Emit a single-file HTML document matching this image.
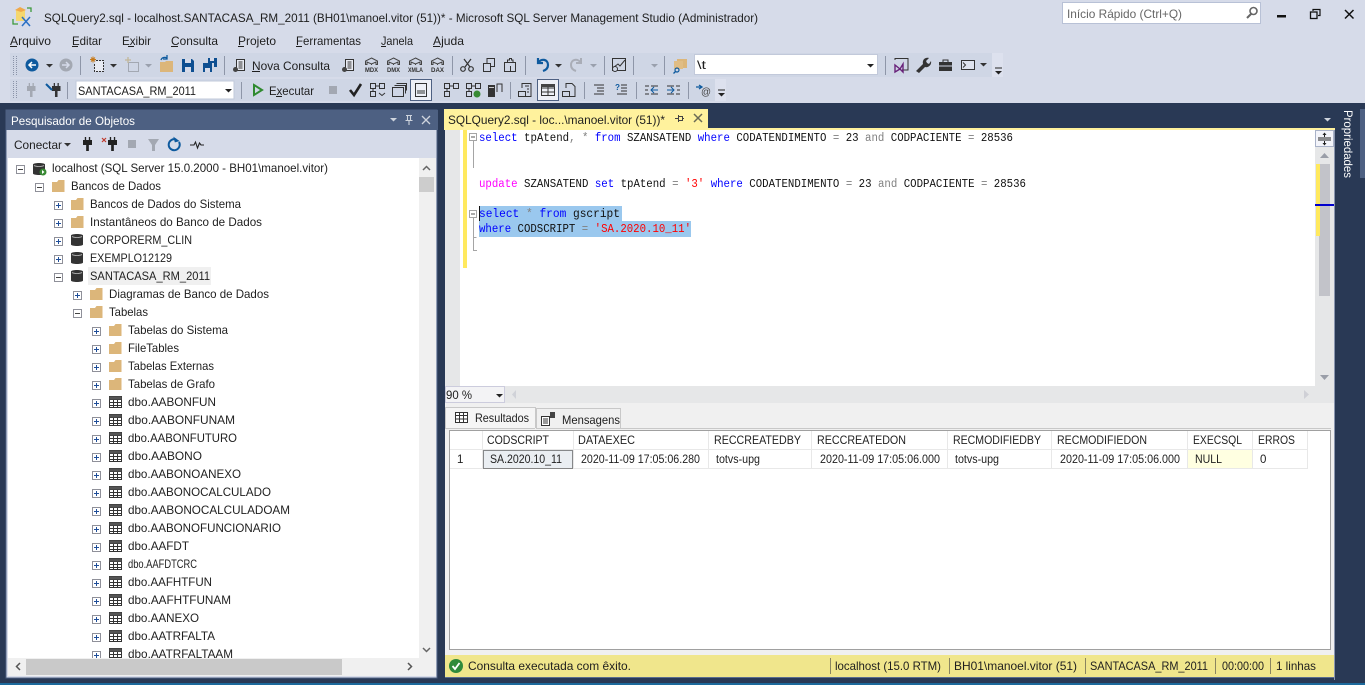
<!DOCTYPE html>
<html><head><meta charset="utf-8"><title>SSMS</title>
<style>
html,body{margin:0;padding:0;width:1365px;height:685px;overflow:hidden;background:#d6dbe9}
svg{display:block}
text{font-family:"Liberation Sans",sans-serif;font-size:12px;fill:#1e1e1e;white-space:pre}
.m text,text.m{font-family:"Liberation Mono",monospace;font-size:11.5px}
.g{font-size:11.5px}
.w{fill:#f4f6fb}
</style></head><body>
<svg xmlns="http://www.w3.org/2000/svg" width="1365" height="685" viewBox="0 0 1365 685">
<defs>
<g id="plus"><g transform="translate(0 1)"><rect x=".5" y=".5" width="8" height="8" fill="#fff" stroke="#8f9099"/><path d="M2 4.500h5M4.500 2v5" stroke="#1f4e99"/></g></g>
<g id="minus"><g transform="translate(0 1)"><rect x=".5" y=".5" width="8" height="8" fill="#fff" stroke="#8f9099"/><path d="M2 4.500h5" stroke="#444"/></g></g>
<g id="folder"><path d="M0 2h5l1.500-2h6v12H0z" fill="#dcb67a"/></g>
<g id="db"><g transform="translate(0 -1)"><path d="M0 2.500C0 .5 12 .5 12 2.500v9c0 2-12 2-12 0z" fill="#333"/><path d="M1 3.500c2 1.300 8 1.300 10 0" stroke="#bbb" fill="none" stroke-width=".8"/></g></g>
<g id="tbl"><rect x=".5" y=".5" width="12" height="11" fill="#fff" stroke="#333"/><path d="M.5 3.500h12M.5 6.500h12M.5 9.500h12M4.500.5v11M8.500.5v11" stroke="#333"/><rect x=".5" y=".5" width="12" height="3" fill="#555"/></g>
<path id="dd" d="M0 0h7l-3.500 3.500z"/>
<g id="cube"><path d="M6.500 0l6 3v3.500h-1.500V4l-4.500 2-4.500-2v2.500H.5V3z" fill="none" stroke="#444"/><path d="M6.500 6v1" stroke="#444"/></g>
<g id="plug"><path d="M2 0h1.500v3H2zM6.500 0H8v3H6.500zM0 3h10v5H6.500v6h-3V8H0z"/></g>
<g id="doc"><path d="M3.500.5h8v11h-8z" fill="#e8ebf3" stroke="#333"/><path d="M5.500 3h4M5.500 5h4M5.500 7h4M5.500 9h4" stroke="#333"/><ellipse cx="2.500" cy="10.500" rx="2.500" ry="2.500" fill="#444"/></g>
</defs>

<!-- window chrome -->
<rect width="1365" height="685" fill="#d6dbe9"/>
<rect y="103" width="1365" height="582" fill="#293955"/>
<rect y="683" width="1365" height="2" fill="#1d6a9c"/>

<!-- app icon -->
<rect x="16" y="10" width="9" height="11" fill="#f5d76e"/><path d="M15 10l5-3 6 3-5 2z" fill="#f0a94a"/>
<path d="M13 19v5h5M27 8h4v4" fill="none" stroke="#3c9a3c" stroke-width="1.300"/>
<path d="M22 26l8-9M22 17l8 9" stroke="#2a6fc4" stroke-width="1.500"/>

<text x="44" y="22" textLength="714" lengthAdjust="spacingAndGlyphs">SQLQuery2.sql - localhost.SANTACASA_RM_2011 (BH01\manoel.vitor (51))* - Microsoft SQL Server Management Studio (Administrador)</text>

<!-- quick launch -->
<rect x="1062.500" y="2.500" width="198" height="21" fill="#fff" stroke="#b8c1d6"/>
<text x="1067" y="18" textLength="115" lengthAdjust="spacingAndGlyphs" style="fill:#666">Início Rápido (Ctrl+Q)</text>
<circle cx="1253.500" cy="11" r="3.500" fill="none" stroke="#666" stroke-width="1.600"/><path d="M1251 14l-4 4" stroke="#666" stroke-width="2"/>
<rect x="1277" y="15" width="9" height="2.500" fill="#111"/>
<path d="M1313 11V9.500h7v6h-2" fill="none" stroke="#111" stroke-width="1.200"/><rect x="1310.500" y="12" width="6.500" height="6.500" fill="none" stroke="#111" stroke-width="1.300"/>
<path d="M1345 10l8.500 8.500M1353.500 10l-8.500 8.500" stroke="#111" stroke-width="1.500"/>

<!-- menu -->
<g>
<text x="10" y="45" textLength="41" lengthAdjust="spacingAndGlyphs">Arquivo</text><rect x="10" y="46" width="7" height="1" fill="#1e1e1e"/>
<text x="72" y="45" textLength="30" lengthAdjust="spacingAndGlyphs">Editar</text><rect x="72" y="46" width="6" height="1" fill="#1e1e1e"/>
<text x="122" y="45" textLength="29" lengthAdjust="spacingAndGlyphs">Exibir</text><rect x="128" y="46" width="6" height="1" fill="#1e1e1e"/>
<text x="171" y="45" textLength="47" lengthAdjust="spacingAndGlyphs">Consulta</text><rect x="171" y="46" width="7" height="1" fill="#1e1e1e"/>
<text x="238" y="45" textLength="38" lengthAdjust="spacingAndGlyphs">Projeto</text><rect x="238" y="46" width="6" height="1" fill="#1e1e1e"/>
<text x="296" y="45" textLength="65" lengthAdjust="spacingAndGlyphs">Ferramentas</text><rect x="296" y="46" width="6" height="1" fill="#1e1e1e"/>
<text x="381" y="45" textLength="32" lengthAdjust="spacingAndGlyphs">Janela</text><rect x="381" y="46" width="5" height="1" fill="#1e1e1e"/>
<text x="433" y="45" textLength="31" lengthAdjust="spacingAndGlyphs">Ajuda</text><rect x="433" y="46" width="7" height="1" fill="#1e1e1e"/>
</g>

<!-- toolbars bg -->
<rect x="10" y="53" width="982" height="24" fill="#cfd6e5"/>
<rect x="992" y="53" width="11" height="24" fill="#dde1ee"/>
<rect x="10" y="79" width="705" height="22" fill="#cfd6e5"/>
<rect x="715" y="79" width="11" height="22" fill="#dde1ee"/>
<path d="M13.500 56v19M16.500 56v19M13.500 81v18M16.500 81v18" stroke="#8a93a8" stroke-dasharray="1 1"/>

<!-- toolbar separators -->
<path d="M80.500 56v19M224.500 56v19M452.500 56v19M525.500 56v19M604.500 56v19M633.500 56v19M664.500 56v19M885.500 56v19M67.500 82v17M241.500 82v17M510.500 82v17M584.500 82v17M636.500 82v17M688.500 82v17" stroke="#8e96a8"/>

<!-- row 1 -->
<circle cx="32" cy="65" r="6.500" fill="#0e5a9e"/><path d="M36 65h-6M32 62l-3 3 3 3" stroke="#fff" stroke-width="1.500" fill="none"/>
<use href="#dd" x="46" y="64" fill="#333"/>
<circle cx="66" cy="65" r="6.500" fill="#a3a8b2"/><path d="M62 65h6M66 62l3 3-3 3" stroke="#d6dbe9" stroke-width="1.500" fill="none"/>
<path d="M96 60.500h7.500v11h-9V64" fill="#e8ebf3" stroke="#333" stroke-dasharray="2 1"/><path d="M90 59.500h6M93 56.500v6M91 57.500l4 4M95 57.500l-4 4" stroke="#c77a1a" stroke-width="1"/>
<use href="#dd" x="110" y="64" fill="#333"/>
<rect x="128.500" y="62.500" width="10" height="9" fill="none" stroke="#a3a8b2"/><path d="M125 60h6M128 57v6" stroke="#c2b79a" stroke-width="1.300"/>
<use href="#dd" x="145" y="64" fill="#9aa0ad"/>
<path d="M160 62h5l1-1h7v11h-13z" fill="#dcb67a"/><path d="M161 60c1-3 4-3 6-2M167 55v4h-4" stroke="#0e5a9e" fill="none" stroke-width="1.300"/>
<path d="M182 59h10l2 2v11h-12z" fill="#0e4f91"/><rect x="185" y="59" width="6" height="4" fill="#d6dbe9"/><rect x="185" y="67" width="6" height="5" fill="#d6dbe9"/>
<path d="M203 63h9v9h-9z" fill="#0e4f91"/><path d="M208 58h9v9h-3v-4h-6z" fill="#0e4f91"/><rect x="205" y="68" width="5" height="4" fill="#d6dbe9"/><rect x="210" y="58" width="4" height="3" fill="#d6dbe9"/>
<use href="#doc" x="233" y="59"/>
<text x="252" y="70" textLength="78" lengthAdjust="spacingAndGlyphs">Nova Consulta</text><rect x="252" y="71" width="8" height="1" fill="#1e1e1e"/>
<use href="#doc" x="342" y="59"/>
<use href="#cube" x="365" y="58"/><text x="365" y="72" textLength="13" lengthAdjust="spacingAndGlyphs" style="font-size:6.500px;font-weight:bold;fill:#333">MDX</text>
<use href="#cube" x="387" y="58"/><text x="387" y="72" textLength="13" lengthAdjust="spacingAndGlyphs" style="font-size:6.500px;font-weight:bold;fill:#333">DMX</text>
<use href="#cube" x="409" y="58"/><text x="408" y="72" textLength="15" lengthAdjust="spacingAndGlyphs" style="font-size:6.500px;font-weight:bold;fill:#333">XMLA</text>
<use href="#cube" x="431" y="58"/><text x="431" y="72" textLength="13" lengthAdjust="spacingAndGlyphs" style="font-size:6.500px;font-weight:bold;fill:#333">DAX</text>
<path d="M464 59l6 8M471 59l-6 8" stroke="#333" stroke-width="1.200"/><circle cx="463" cy="69" r="2.300" fill="none" stroke="#333" stroke-width="1.200"/><circle cx="471" cy="69" r="2.300" fill="none" stroke="#333" stroke-width="1.200"/>
<rect x="483.500" y="63.500" width="7" height="8" fill="none" stroke="#333"/><path d="M487 63v-4.500h7.500v8H491" fill="none" stroke="#333"/>
<rect x="504.500" y="62.500" width="11" height="9" fill="none" stroke="#333"/><path d="M507.500 62v-2h2v-1.500h2V60h1.500v3" fill="none" stroke="#333"/><path d="M510.500 66v5.500" stroke="#333"/>
<path d="M538 58v5h5M538 63c3-5 10-4 10 2 0 3-2 5-5 6" fill="none" stroke="#0e5a9e" stroke-width="2.200"/>
<use href="#dd" x="555" y="64" fill="#333"/>
<path d="M581 58v5h-5M581 63c-3-5-10-4-10 2 0 3 2 5 5 6" fill="none" stroke="#a9adb7" stroke-width="2"/>
<use href="#dd" x="590" y="64" fill="#9aa0ad"/>
<rect x="612.500" y="58.500" width="13" height="12" fill="none" stroke="#333"/><path d="M614 67l4-3 2 2 5-6" stroke="#333" fill="none"/><circle cx="615" cy="69" r="2.500" fill="#cfd6e5" stroke="#333"/>
<use href="#dd" x="651" y="64" fill="#9aa0ad"/>
<rect x="677" y="59" width="10" height="9" fill="#dcb67a"/><rect x="674" y="61" width="9" height="8" fill="#e0bd85"/><circle cx="677" cy="70" r="2" fill="none" stroke="#0e5a9e" stroke-width="1.200"/><path d="M675.500 71.500l-2 2" stroke="#0e5a9e" stroke-width="1.300"/>
<rect x="694.500" y="54.500" width="183" height="20" fill="#fff" stroke="#c2c9da"/>
<text x="697" y="69" textLength="9" lengthAdjust="spacingAndGlyphs">\t</text>
<use href="#dd" x="867" y="64" fill="#222"/>
<path d="M895 60v-1.500h13V70h-6" fill="none" stroke="#333"/><path d="M894 62h8v10h-8z" fill="#cfd6e5"/><path d="M895 65l5 4 3-5v8l-3-3-5 3z" fill="none" stroke="#68217a" stroke-width="1.400"/>
<path d="M917 72l7-7c-1-4 2-7 6-6l-3 3 1 2 2 1 2-3c1 4-3 7-6 6l-6 6z" fill="#333" transform="translate(-1 -1)"/>
<path d="M939 62h13v9h-13z" fill="#333"/><path d="M943 62v-2h5v2" fill="none" stroke="#333"/><path d="M939 66h13" stroke="#cfd6e5"/>
<rect x="961.500" y="60.500" width="13" height="9" fill="#dfe3ee" stroke="#333"/><path d="M963 62.500l2.500 2.500-2.500 2.500" fill="none" stroke="#333"/>
<use href="#dd" x="980" y="63" fill="#333"/>
<path d="M995 68h7" stroke="#222"/><use href="#dd" x="995" y="71" fill="#222"/>

<!-- row 2 -->
<g fill="#a3a8b2" transform="translate(27 83) scale(.85 1)"><use href="#plug"/></g>
<g fill="#333" transform="translate(52 83) scale(.85 1)"><use href="#plug"/></g><path d="M46 84l6 6" stroke="#0e5a9e" stroke-width="2"/>
<rect x="76" y="81" width="158" height="18" fill="#fff" stroke="#c2c9da"/>
<text x="78" y="95" textLength="118" lengthAdjust="spacingAndGlyphs">SANTACASA_RM_2011</text>
<use href="#dd" x="225" y="89" fill="#222"/>
<path d="M254 85l8 5-8 5z" fill="none" stroke="#2f8a2f" stroke-width="2"/>
<text x="269" y="95" textLength="45" lengthAdjust="spacingAndGlyphs">Executar</text><rect x="276" y="96" width="6" height="1" fill="#1e1e1e"/>
<rect x="329" y="86" width="8" height="8" fill="#a3a8b2"/>
<path d="M350 90l4 5 7-11" stroke="#222" stroke-width="2.600" fill="none"/>
<g fill="none" stroke="#333"><rect x="370.500" y="83.500" width="5" height="5"/><rect x="379.500" y="83.500" width="5" height="5"/><rect x="370.500" y="91.500" width="5" height="5"/><path d="M376 86h3M373 89v2M379 93l3 2.500 3-2.500"/>
<rect x="392.500" y="87.500" width="11" height="9"/><path d="M394.500 85.500h11v8M396.500 83.500h10v7"/></g>
<rect x="410.500" y="79.500" width="21" height="21" fill="#eef0f6" stroke="#4d6082"/>
<rect x="415.500" y="83.500" width="11" height="13" fill="none" stroke="#333"/><path d="M417 91h8M417 93h8" stroke="#333"/>
<g fill="none" stroke="#333"><rect x="444.500" y="83.500" width="5" height="5"/><rect x="453.500" y="83.500" width="5" height="5"/><rect x="444.500" y="91.500" width="5" height="5"/><path d="M450 86h3M447 89v2"/></g>
<g fill="none" stroke="#333"><rect x="466.500" y="83.500" width="5" height="5"/><rect x="475.500" y="83.500" width="5" height="5"/><rect x="466.500" y="91.500" width="5" height="5"/><path d="M472 86h3M469 89v2"/></g><circle cx="477" cy="94" r="3.500" fill="#388a34"/>
<rect x="488" y="85" width="7" height="12" fill="#333"/><path d="M497 92V84h5v8" fill="none" stroke="#333"/><rect x="489" y="87" width="5" height="1" fill="#ccc"/>
<g fill="none" stroke="#333"><path d="M522 88v-4.500h9v13h-5"/><rect x="518.500" y="91.500" width="7" height="5"/><path d="M525 86h4M527 89h2M527 92h2"/></g>
<rect x="537.500" y="79.500" width="21" height="21" fill="#eef0f6" stroke="#4d6082"/>
<g fill="none" stroke="#333"><rect x="541.500" y="84.500" width="13" height="11"/><path d="M541 88h14M541 92h14M548 85v10"/></g><rect x="541" y="84" width="14" height="3" fill="#444"/>
<g fill="none" stroke="#333"><path d="M566 88v-4.500h6l3 3v10h-5"/><rect x="562.500" y="91.500" width="7" height="5"/></g>
<path d="M594 85h10M597 88h7M597 91h7M594 94h10" stroke="#333"/>
<path d="M621 88h6M621 91h6M617 94h10M621 85h6" stroke="#333"/><text x="615" y="90" textLength="5" lengthAdjust="spacingAndGlyphs" style="font-size:8px;fill:#0e5a9e;font-weight:bold">?</text>
<path d="M645 86h4M645 94h4M651 86h7M651 94h7M645 90h3" stroke="#333"/><path d="M651 90h7M654 87l-3 3 3 3" stroke="#0e5a9e" fill="none"/>
<path d="M667 86h7M667 94h7M676 86h4M676 94h4M677 90h3" stroke="#333"/><path d="M667 90h7M671 87l3 3-3 3" stroke="#0e5a9e" fill="none"/>
<path d="M696 87h5M699 85l3 2-3 2" stroke="#0e5a9e" fill="none" stroke-width="1.300"/><text x="701" y="95" textLength="10" lengthAdjust="spacingAndGlyphs" style="font-size:10px;fill:#444">@</text>
<path d="M718 90h7" stroke="#222"/><use href="#dd" x="718" y="93" fill="#222"/>

<!-- OBJECT EXPLORER -->
<rect x="6" y="110" width="431" height="568" fill="#d6dbe9" stroke="#4d6082"/>
<rect x="6" y="110" width="432" height="20" fill="#4d6082"/>
<text x="11" y="125" textLength="124" lengthAdjust="spacingAndGlyphs" style="fill:#fff">Pesquisador de Objetos</text>
<use href="#dd" x="390" y="118" fill="#ced4dd"/>
<path d="M406 115.500h6M407.500 115.500v5h3v-5M405.500 120.500h7M409 121v4" fill="none" stroke="#ced4dd" stroke-width="1.100"/>
<path d="M422 116l8 8M430 116l-8 8" stroke="#ced4dd" stroke-width="1.300"/>
<text x="14" y="149" textLength="48" lengthAdjust="spacingAndGlyphs">Conectar</text><use href="#dd" x="64" y="143" fill="#333"/>
<g fill="#222" transform="translate(83 137) scale(.9 1)"><use href="#plug"/></g>
<g fill="#222" transform="translate(108 137) scale(.9 1)"><use href="#plug"/></g><path d="M102 138l4 4M106 138l-4 4" stroke="#c0392b" stroke-width="1.200"/>
<rect x="128" y="140" width="8" height="8" fill="#a3a8b2"/>
<path d="M148 139h11l-4 6v6h-3v-6z" fill="#a3a8b2"/>
<path d="M179 142a5.500 5.500 0 1 1-3-2.500" fill="none" stroke="#0e5a9e" stroke-width="2"/><path d="M174 136v6h5z" fill="#0e5a9e" transform="rotate(-15 176 139)"/>
<path d="M190 145h4l1.500-3 2 6 2-5 1.500 2h3" fill="none" stroke="#222" stroke-width="1.100"/>

<rect x="8" y="158" width="411" height="500" fill="#fff"/>
<rect x="419" y="158" width="17" height="500" fill="#f0f0f0"/>
<rect x="419" y="177" width="15" height="15" fill="#cdcdcd"/>
<path d="M423 170l3.500-3.500 3.500 3.500" fill="none" stroke="#666" stroke-width="1.500"/>
<path d="M423 648l3.500 3.500 3.500-3.500" fill="none" stroke="#666" stroke-width="1.500"/>
<rect x="8" y="658" width="428" height="18" fill="#f0f0f0"/>
<rect x="26" y="659" width="316" height="16" fill="#c9c9c9"/>
<path d="M20 663l-3.500 3.500 3.500 3.500M408 663l3.500 3.500-3.500 3.500" fill="none" stroke="#555" stroke-width="1.500"/>

<svg x="8" y="158" width="411" height="500" viewBox="8 158 411 500" overflow="hidden">
<use href="#minus" x="16" y="164"/><use href="#db" x="33" y="163"/><circle cx="43" cy="172" r="3.500" fill="#388a34"/><path d="M42 170l2.500 2-2.500 2z" fill="#fff"/>
<text x="52" y="172" textLength="276" lengthAdjust="spacingAndGlyphs">localhost (SQL Server 15.0.2000 - BH01\manoel.vitor)</text>
<use href="#minus" x="35" y="182"/><use href="#folder" x="52" y="180"/><text x="71" y="190" textLength="90" lengthAdjust="spacingAndGlyphs">Bancos de Dados</text>
<use href="#plus" x="54" y="200"/><use href="#folder" x="71" y="198"/><text x="90" y="208" textLength="151" lengthAdjust="spacingAndGlyphs">Bancos de Dados do Sistema</text>
<use href="#plus" x="54" y="218"/><use href="#folder" x="71" y="216"/><text x="90" y="226" textLength="172" lengthAdjust="spacingAndGlyphs">Instantâneos do Banco de Dados</text>
<use href="#plus" x="54" y="236"/><use href="#db" x="71" y="234"/><text x="90" y="244" textLength="102" lengthAdjust="spacingAndGlyphs">CORPORERM_CLIN</text>
<use href="#plus" x="54" y="254"/><use href="#db" x="71" y="252"/><text x="90" y="262" textLength="82" lengthAdjust="spacingAndGlyphs">EXEMPLO12129</text>
<use href="#minus" x="54" y="272"/><use href="#db" x="71" y="270"/><rect x="88" y="267" width="123" height="18" fill="#f0f0f0"/><text x="90" y="280" textLength="120" lengthAdjust="spacingAndGlyphs">SANTACASA_RM_2011</text>
<use href="#plus" x="73" y="290"/><use href="#folder" x="90" y="288"/><text x="109" y="298" textLength="160" lengthAdjust="spacingAndGlyphs">Diagramas de Banco de Dados</text>
<use href="#minus" x="73" y="308"/><use href="#folder" x="90" y="306"/><text x="109" y="316" textLength="39" lengthAdjust="spacingAndGlyphs">Tabelas</text>
<use href="#plus" x="92" y="326"/><use href="#folder" x="109" y="324"/><text x="128" y="334" textLength="100" lengthAdjust="spacingAndGlyphs">Tabelas do Sistema</text>
<use href="#plus" x="92" y="344"/><use href="#folder" x="109" y="342"/><text x="128" y="352" textLength="51" lengthAdjust="spacingAndGlyphs">FileTables</text>
<use href="#plus" x="92" y="362"/><use href="#folder" x="109" y="360"/><text x="128" y="370" textLength="86" lengthAdjust="spacingAndGlyphs">Tabelas Externas</text>
<use href="#plus" x="92" y="380"/><use href="#folder" x="109" y="378"/><text x="128" y="388" textLength="87" lengthAdjust="spacingAndGlyphs">Tabelas de Grafo</text>
<use href="#plus" x="92" y="398"/><use href="#tbl" x="109" y="396"/><text x="128" y="406" textLength="88" lengthAdjust="spacingAndGlyphs">dbo.AABONFUN</text>
<use href="#plus" x="92" y="416"/><use href="#tbl" x="109" y="414"/><text x="128" y="424" textLength="107" lengthAdjust="spacingAndGlyphs">dbo.AABONFUNAM</text>
<use href="#plus" x="92" y="434"/><use href="#tbl" x="109" y="432"/><text x="128" y="442" textLength="109" lengthAdjust="spacingAndGlyphs">dbo.AABONFUTURO</text>
<use href="#plus" x="92" y="452"/><use href="#tbl" x="109" y="450"/><text x="128" y="460" textLength="74" lengthAdjust="spacingAndGlyphs">dbo.AABONO</text>
<use href="#plus" x="92" y="470"/><use href="#tbl" x="109" y="468"/><text x="128" y="478" textLength="113" lengthAdjust="spacingAndGlyphs">dbo.AABONOANEXO</text>
<use href="#plus" x="92" y="488"/><use href="#tbl" x="109" y="486"/><text x="128" y="496" textLength="143" lengthAdjust="spacingAndGlyphs">dbo.AABONOCALCULADO</text>
<use href="#plus" x="92" y="506"/><use href="#tbl" x="109" y="504"/><text x="128" y="514" textLength="162" lengthAdjust="spacingAndGlyphs">dbo.AABONOCALCULADOAM</text>
<use href="#plus" x="92" y="524"/><use href="#tbl" x="109" y="522"/><text x="128" y="532" textLength="153" lengthAdjust="spacingAndGlyphs">dbo.AABONOFUNCIONARIO</text>
<use href="#plus" x="92" y="542"/><use href="#tbl" x="109" y="540"/><text x="128" y="550" textLength="61" lengthAdjust="spacingAndGlyphs">dbo.AAFDT</text>
<use href="#plus" x="92" y="560"/><use href="#tbl" x="109" y="558"/><text x="128" y="568" textLength="69" lengthAdjust="spacingAndGlyphs">dbo.AAFDTCRC</text>
<use href="#plus" x="92" y="578"/><use href="#tbl" x="109" y="576"/><text x="128" y="586" textLength="84" lengthAdjust="spacingAndGlyphs">dbo.AAFHTFUN</text>
<use href="#plus" x="92" y="596"/><use href="#tbl" x="109" y="594"/><text x="128" y="604" textLength="103" lengthAdjust="spacingAndGlyphs">dbo.AAFHTFUNAM</text>
<use href="#plus" x="92" y="614"/><use href="#tbl" x="109" y="612"/><text x="128" y="622" textLength="71" lengthAdjust="spacingAndGlyphs">dbo.AANEXO</text>
<use href="#plus" x="92" y="632"/><use href="#tbl" x="109" y="630"/><text x="128" y="640" textLength="87" lengthAdjust="spacingAndGlyphs">dbo.AATRFALTA</text>
<use href="#plus" x="92" y="650"/><use href="#tbl" x="109" y="648"/><text x="128" y="658" textLength="105" lengthAdjust="spacingAndGlyphs">dbo.AATRFALTAAM</text>
</svg>

<!-- EDITOR -->
<rect x="444" y="109" width="264" height="20" fill="#fff29d"/>
<rect x="444" y="128" width="891" height="2" fill="#fff29d"/>
<text x="448" y="124" textLength="217" lengthAdjust="spacingAndGlyphs">SQLQuery2.sql - loc...\manoel.vitor (51))*</text>
<path d="M675 118.500h3M678.500 115v7M678.500 116.500h4v4h-4M682.500 118.500h1.500" fill="none" stroke="#444"/>
<path d="M694 114l8 8M702 114l-8 8" stroke="#6a6a55" stroke-width="1.500"/>
<use href="#dd" x="1324" y="118" fill="#ced4dd"/>
<text transform="translate(1344 110) rotate(90)" textLength="68" lengthAdjust="spacingAndGlyphs" style="fill:#fff">Propriedades</text>
<rect x="1360" y="109" width="5" height="69" fill="#4d6082"/>

<rect x="445" y="130" width="890" height="257" fill="#fff"/>
<rect x="445" y="130" width="15" height="257" fill="#e6e7e8"/>
<rect x="463" y="130" width="4" height="138" fill="#ffe95e"/>
<path d="M473.500 141v27M473.500 218v32.500h3.500M473.500 237.500h3" fill="none" stroke="#a5a5a5"/>
<rect x="469.500" y="133.500" width="7" height="7" fill="#fff" stroke="#a5a5a5"/><path d="M471 137h4" stroke="#555"/>
<rect x="469.500" y="210.500" width="7" height="7" fill="#fff" stroke="#a5a5a5"/><path d="M471 214h4" stroke="#555"/>
<rect x="479" y="206" width="143" height="15" fill="#9ac8ee"/>
<rect x="479" y="221" width="212" height="16" fill="#9ac8ee"/>
<rect x="479" y="206" width="1" height="15" fill="#111"/>
<g class="m">
<text x="479" y="141" textLength="534" lengthAdjust="spacingAndGlyphs" style="fill:#111"><tspan fill="#0000ff">select</tspan> tpAtend<tspan fill="#808080">,</tspan> <tspan fill="#808080">*</tspan> <tspan fill="#0000ff">from</tspan> SZANSATEND <tspan fill="#0000ff">where</tspan> CODATENDIMENTO <tspan fill="#808080">=</tspan> 23 <tspan fill="#808080">and</tspan> CODPACIENTE <tspan fill="#808080">=</tspan> 28536</text>
<text x="479" y="187" textLength="547" lengthAdjust="spacingAndGlyphs" style="fill:#111"><tspan fill="#ff00ff">update</tspan> SZANSATEND <tspan fill="#0000ff">set</tspan> tpAtend <tspan fill="#808080">=</tspan> <tspan fill="#ff0000">'3'</tspan> <tspan fill="#0000ff">where</tspan> CODATENDIMENTO <tspan fill="#808080">=</tspan> 23 <tspan fill="#808080">and</tspan> CODPACIENTE <tspan fill="#808080">=</tspan> 28536</text>
<text x="479" y="217" textLength="141" lengthAdjust="spacingAndGlyphs" style="fill:#111"><tspan fill="#0000ff">select</tspan> <tspan fill="#808080">*</tspan> <tspan fill="#0000ff">from</tspan> gscript</text>
<text x="479" y="232" textLength="212" lengthAdjust="spacingAndGlyphs" style="fill:#111"><tspan fill="#0000ff">where</tspan> CODSCRIPT <tspan fill="#808080">=</tspan> <tspan fill="#ff0000">'SA.2020.10_11'</tspan></text>
</g>
<!-- editor scrollbar -->
<rect x="1315" y="130" width="19" height="257" fill="#e6e7e8"/>
<rect x="1315.500" y="130.500" width="18" height="16" fill="#f3f4fa" stroke="#a9b2c8"/>
<path d="M1318 138h13M1318 140h13M1324.500 133v4M1324.500 141v4" stroke="#222"/><path d="M1322.500 135l2-2.500 2 2.500zM1322.500 143l2 2.500 2-2.500z" fill="#222"/>
<path d="M1320 158l4.500-5 4.500 5z" fill="#9a9ea8"/>
<rect x="1319" y="164" width="11" height="132" fill="#c2c3c9"/>
<rect x="1316" y="164" width="4" height="72" fill="#ffe95e"/>
<rect x="1315" y="204" width="19" height="2" fill="#0000cd"/>
<path d="M1320 375l4.500 5 4.500-5z" fill="#9a9ea8"/>
<rect x="1334" y="130" width="1" height="550" fill="#8a96b0"/>
<!-- zoom bar -->
<rect x="445" y="386" width="889" height="17" fill="#e6e7e8"/>
<rect x="445.500" y="386.500" width="59" height="16" fill="#f3f3f5" stroke="#ccd"/>
<text x="446" y="399" textLength="26" lengthAdjust="spacingAndGlyphs">90 %</text>
<use href="#dd" x="496" y="394" fill="#222"/>
<path d="M516 390l-4 4.500 4 4.500z" fill="#d0d2d8"/><path d="M1304 390l5 4.500-5 4.500z" fill="#cfd0d6"/>

<!-- RESULTS -->
<rect x="445" y="403" width="889" height="252" fill="#f0f0f0"/>
<path d="M445.500 428v-20.500h90V428" fill="#f5f5f5" stroke="#c8c8c8"/>
<path d="M536.500 428v-19.500h84V428" fill="#f0f0f0" stroke="#c8c8c8"/>
<path d="M445 428.500h90M536 428.500h795" stroke="#c8c8c8"/>
<rect x="455.500" y="412.500" width="12" height="10" fill="#fff" stroke="#333"/><path d="M455 415.500h13M455 419h13M459.500 412v11M463.500 412v11" stroke="#333"/>
<text x="475" y="422" textLength="54" lengthAdjust="spacingAndGlyphs">Resultados</text>
<rect x="541.500" y="416.500" width="8" height="9" fill="#fff" stroke="#333"/><path d="M543 419h5M543 421h5M543 423h5" stroke="#333"/><rect x="550" y="412" width="5" height="6" fill="#444"/>
<text x="562" y="424" textLength="58" lengthAdjust="spacingAndGlyphs">Mensagens</text>
<rect x="449.500" y="430.500" width="881" height="219" fill="#fff" stroke="#a0a0a0"/>
<path d="M450 449.500h857M450 468.500h857M482.500 431v38M573.500 431v38M708.500 431v38M811.500 431v38M947.500 431v38M1051.500 431v38M1187.500 431v38M1252.500 431v38M1307.500 431v38" stroke="#e8e8e8"/>
<rect x="1188" y="450" width="64" height="18" fill="#ffffe1"/>
<rect x="483" y="450" width="90" height="18" fill="#eaeef2"/>
<rect x="483.500" y="450.500" width="89" height="18" fill="none" stroke="#222" stroke-dasharray="1 1"/>
<g>
<text class="g" x="487" y="444" textLength="62" lengthAdjust="spacingAndGlyphs">CODSCRIPT</text>
<text class="g" x="578" y="444" textLength="57" lengthAdjust="spacingAndGlyphs">DATAEXEC</text>
<text class="g" x="714" y="444" textLength="87" lengthAdjust="spacingAndGlyphs">RECCREATEDBY</text>
<text class="g" x="817" y="444" textLength="89" lengthAdjust="spacingAndGlyphs">RECCREATEDON</text>
<text class="g" x="953" y="444" textLength="88" lengthAdjust="spacingAndGlyphs">RECMODIFIEDBY</text>
<text class="g" x="1057" y="444" textLength="90" lengthAdjust="spacingAndGlyphs">RECMODIFIEDON</text>
<text class="g" x="1193" y="444" textLength="49" lengthAdjust="spacingAndGlyphs">EXECSQL</text>
<text class="g" x="1258" y="444" textLength="37" lengthAdjust="spacingAndGlyphs">ERROS</text>
<text class="g" x="457" y="463">1</text>
<text class="g" x="490" y="463" textLength="72" lengthAdjust="spacingAndGlyphs">SA.2020.10_11</text>
<text class="g" x="581" y="463" textLength="119" lengthAdjust="spacingAndGlyphs">2020-11-09 17:05:06.280</text>
<text class="g" x="716" y="463" textLength="44" lengthAdjust="spacingAndGlyphs">totvs-upg</text>
<text class="g" x="820" y="463" textLength="120" lengthAdjust="spacingAndGlyphs">2020-11-09 17:05:06.000</text>
<text class="g" x="955" y="463" textLength="44" lengthAdjust="spacingAndGlyphs">totvs-upg</text>
<text class="g" x="1060" y="463" textLength="120" lengthAdjust="spacingAndGlyphs">2020-11-09 17:05:06.000</text>
<text class="g" x="1195" y="463" textLength="27" lengthAdjust="spacingAndGlyphs">NULL</text>
<text class="g" x="1260" y="463">0</text>
</g>

<!-- STATUS -->
<rect x="445" y="655" width="889" height="22" fill="#f0e68c"/>
<rect x="445" y="677" width="889" height="1" fill="#5a6d8f"/>
<circle cx="456" cy="666" r="7" fill="#2f8a3a"/><path d="M452.500 666l2.500 3 4.500-6" stroke="#fff" stroke-width="1.800" fill="none"/>
<text x="468" y="670" textLength="163" lengthAdjust="spacingAndGlyphs">Consulta executada com êxito.</text>
<path d="M830.500 658v16M949.500 658v16M1085.500 658v16M1215.500 658v16M1270.500 658v16" stroke="#8a8560"/>
<text x="835" y="670" textLength="106" lengthAdjust="spacingAndGlyphs">localhost (15.0 RTM)</text>
<text x="954" y="670" textLength="123" lengthAdjust="spacingAndGlyphs">BH01\manoel.vitor (51)</text>
<text x="1090" y="670" textLength="118" lengthAdjust="spacingAndGlyphs">SANTACASA_RM_2011</text>
<text x="1222" y="670" textLength="42" lengthAdjust="spacingAndGlyphs">00:00:00</text>
<text x="1276" y="670" textLength="40" lengthAdjust="spacingAndGlyphs">1 linhas</text>
</svg>
</body></html>
